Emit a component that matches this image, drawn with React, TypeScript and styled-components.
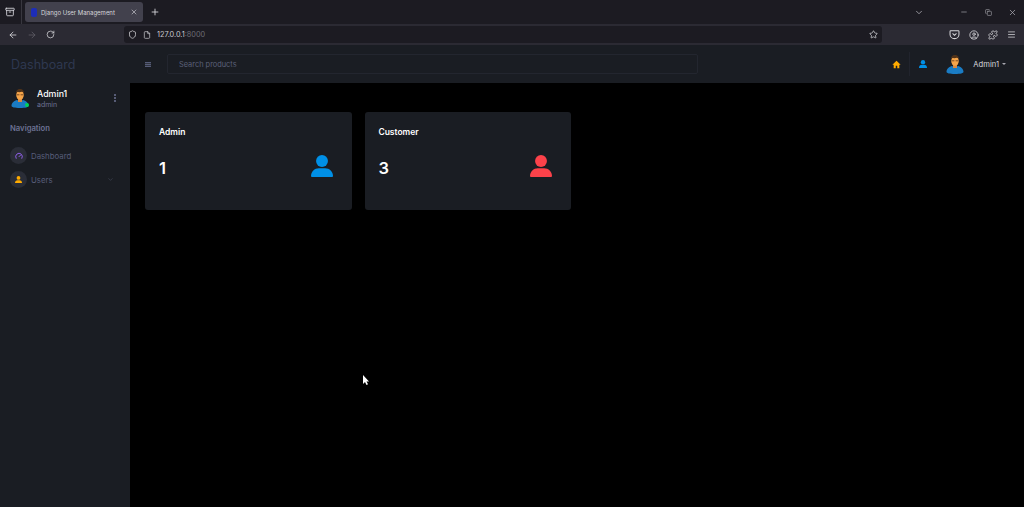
import React from "react";
import styled, { createGlobalStyle } from "styled-components";
import { ArrowLeft, ArrowRight, RotateCw, Shield, File, Star, Plus, X, ChevronDown, Minus, CircleUser, Puzzle, Menu, Copy, Archive, Gauge } from "lucide-react";

const Global = createGlobalStyle`
  html, body { margin: 0; padding: 0; background: #000; width: 1024px; height: 507px; overflow: hidden; }
  body { font-family: Inter, Roboto, "Liberation Sans", sans-serif; }
  #root { width: 1024px; height: 507px; }
`;

const Page = styled.div`
  position: relative;
  width: 1024px;
  height: 507px;
  display: flex;
  flex-direction: column;
  background: #000;
  overflow: hidden;
`;

const TabStrip = styled.div`
  height: 24px;
  flex: none;
  display: flex;
  align-items: center;
  background: #1c1b22;
  color: #e0e0e6;
`;
const TabViews = styled.div`
  width: 22px;
  height: 24px;
  display: flex;
  align-items: center;
  justify-content: center;
  border-right: 1px solid #38373f;
  box-sizing: border-box;
  padding-right: 1px;
  flex: none;
`;
const Tab = styled.div`
  width: 118px;
  height: 20px;
  margin-left: 3px;
  background: #42414d;
  border-radius: 3px;
  display: flex;
  align-items: center;
  padding: 0 5px 0 6px;
  box-sizing: border-box;
  flex: none;
`;
const Favicon = styled.span`
  width: 6px;
  height: 9px;
  border-radius: 2px;
  background: #1d2db8;
  margin-right: 4px;
  flex: none;
`;
const TabTitle = styled.span`
  flex: 1;
  font-size: 6px;
  color: #d6d6dc;
  white-space: nowrap;
`;
const NewTab = styled.span`
  display: flex;
  margin-left: 7px;
`;
const Spacer = styled.div`
  flex: 1;
`;
const WindowControls = styled.div`
  display: flex;
  align-items: center;
  color: #a8a8b0;
`;
const ControlSlot = styled.span<{ $w: number }>`
  width: ${(p) => p.$w}px;
  display: flex;
  justify-content: center;
`;

const NavBar = styled.div`
  height: 21px;
  flex: none;
  display: flex;
  align-items: center;
  background: #2b2a33;
  color: #d5d5da;
`;
const NavButtons = styled.div`
  width: 124px;
  flex: none;
  display: flex;
  align-items: center;
  padding-left: 8px;
  gap: 9px;
  box-sizing: border-box;
`;
const UrlBar = styled.div`
  width: 758px;
  height: 17px;
  flex: none;
  background: #1c1b22;
  border-radius: 3px;
  display: flex;
  align-items: center;
  padding: 0 4px;
  box-sizing: border-box;
  gap: 6px;
`;
const UrlText = styled.span`
  font-size: 7.3px;
  color: #c8c8ce;
  flex: 1;
`;
const UrlPort = styled.span`
  color: #6d6d75;
`;
const NavTools = styled.div`
  flex: 1;
  display: flex;
  align-items: center;
  padding-left: 67px;
  gap: 9px;
`;

const Shell = styled.div`
  flex: 1;
  display: flex;
  min-height: 0;
`;
const Sidebar = styled.aside`
  width: 130px;
  flex: none;
  background: #1a1d23;
  display: flex;
  flex-direction: column;
`;
const Brand = styled.div`
  height: 38px;
  display: flex;
  align-items: center;
  padding-left: 11px;
  font-size: 12.5px;
  color: #2e3850;
  flex: none;
`;
const Profile = styled.div`
  display: flex;
  align-items: center;
  padding: 5px 11px 0 11px;
  height: 20px;
`;
const AvatarWrap = styled.div`
  position: relative;
  width: 18px;
  height: 20px;
  flex: none;
`;
const OnlineDot = styled.span`
  position: absolute;
  right: 0;
  bottom: 1px;
  width: 4px;
  height: 4px;
  border-radius: 50%;
  background: #00d25b;
`;
const ProfileText = styled.div`
  margin-left: 8px;
  flex: 1;
  display: flex;
  flex-direction: column;
  gap: 1px;
`;
const ProfileName = styled.div`
  font-size: 8.8px;
  line-height: 12px;
  font-weight: 500;
  color: #fff;
`;
const ProfileRole = styled.div`
  font-size: 7px;
  line-height: 8px;
  color: #6c7293;
`;
const Kebab = styled.div`
  display: flex;
  flex-direction: column;
  gap: 1px;
  margin-right: 3px;
  span {
    width: 2px;
    height: 2px;
    background: #6c7293;
    border-radius: 50%;
  }
`;
const NavHeading = styled.div`
  font-size: 7.7px;
  font-weight: 600;
  color: #6c7293;
  padding: 15px 0 0 10px;
  line-height: 12px;
`;
const NavList = styled.div`
  display: flex;
  flex-direction: column;
  gap: 7px;
  padding: 12px 0 0 10px;
`;
const NavItem = styled.div`
  display: flex;
  align-items: center;
  height: 17px;
  font-size: 7.8px;
  color: #565c78;
`;
const NavIcon = styled.span`
  width: 17px;
  height: 17px;
  border-radius: 50%;
  background: #2a2d37;
  display: flex;
  align-items: center;
  justify-content: center;
  margin-right: 4px;
  flex: none;
`;
const NavLabel = styled.span`
  flex: 1;
`;
const NavChevron = styled.span`
  display: flex;
  margin-right: 16px;
  color: #454a5c;
`;

const Content = styled.div`
  flex: 1;
  display: flex;
  flex-direction: column;
  min-width: 0;
`;
const Header = styled.header`
  height: 38px;
  flex: none;
  background: #1a1d23;
  display: flex;
  align-items: center;
  padding-left: 15px;
`;
const Burger = styled.span`
  width: 6px;
  height: 5px;
  flex: none;
  margin-right: 16px;
  background: repeating-linear-gradient(#565c78 0 1px, #30343f 1px 2px);
`;
const Search = styled.div`
  width: 531px;
  height: 20px;
  flex: none;
  box-sizing: border-box;
  border: 1px solid #23262f;
  border-radius: 2px;
  display: flex;
  align-items: center;
  padding-left: 11px;
  font-size: 7.4px;
  color: #5a6078;
`;
const HeaderRight = styled.div`
  flex: 1;
  display: flex;
  align-items: center;
  justify-content: flex-end;
  padding-right: 18px;
`;
const HeaderIcon = styled.span`
  display: flex;
  width: 9px;
`;
const HeaderDivider = styled.span`
  width: 1px;
  height: 24px;
  background: #21242d;
  margin: 0 9px 0 8px;
`;
const HeaderAvatar = styled.span`
  width: 18px;
  height: 20px;
  display: flex;
  margin: 0 9px 0 18px;
`;
const HeaderName = styled.span`
  font-size: 7.6px;
  color: #d8d8de;
`;
const Caret = styled.span`
  width: 0;
  height: 0;
  margin-left: 3px;
  border-left: 2px solid transparent;
  border-right: 2px solid transparent;
  border-top: 2px solid #a8a8b0;
`;

const Main = styled.main`
  flex: 1;
  background: #000;
  display: flex;
  align-items: flex-start;
  gap: 13px;
  padding: 28.5px 0 0 15.3px;
`;
const Card = styled.section`
  width: 206.4px;
  height: 98.5px;
  box-sizing: border-box;
  background: #1a1d23;
  border-radius: 3px;
  padding: 14.5px 18.7px 0 13.7px;
  display: flex;
  flex-direction: column;
`;
const CardTitle = styled.div`
  font-size: 8.5px;
  line-height: 13px;
  font-weight: 600;
  color: #fff;
`;
const CardRow = styled.div`
  display: flex;
  align-items: center;
  justify-content: space-between;
  margin-top: 16px;
  height: 26px;
`;
const CardValue = styled.div`
  font-size: 16.5px;
  font-weight: 600;
  color: #fff;
`;
const CardIcon = styled.div`
  margin-bottom: 4px;
`;
const PersonSvg = styled.svg<{ $c: string }>`
  fill: ${(p) => p.$c};
  display: block;
`;
const Pointer = styled.svg`
  position: absolute;
  left: 362px;
  top: 374px;
`;

function Person({ size, color }: { size: number; color: string }) {
  return (
    <PersonSvg $c={color} width={size} height={size} viewBox="0 0 24 24">
      <circle cx="12" cy="6.500" r="6.500" />
      <path d="M0 23c0-5 3.800-8.600 8.600-8.600h6.800c4.800 0 8.600 3.600 8.600 8.600 0 .6-.4 1-1 1H1c-.6 0-1-.4-1-1z" />
    </PersonSvg>
  );
}

function Avatar() {
  return (
    <svg width="18" height="20" viewBox="0 0 18 20">
      <path d="M0.500 18c0-3.500 3-5.500 5.500-6l3 1.500 3-1.500c2.500.5 5.500 2.500 5.500 6 0 1-3 2-8.500 2S.5 19 .5 18z" fill="#1a7cc4" />
      <rect x="7" y="10" width="4" height="4" fill="#d9893f" />
      <ellipse cx="9" cy="7" rx="3.800" ry="4.800" fill="#f5a54a" />
      <path d="M5 6c-.3-3.500 1.500-5 4-5s4.300 1.500 4 5c-.6-1.500-1.300-2-2-2.200-1.500.4-3.500.4-4.500.2C5.800 4.300 5.300 5 5 6z" fill="#4f3219" />
      <rect x="5.600" y="6" width="2.800" height="1.400" fill="#7a4a20" opacity=".7" />
      <rect x="9.600" y="6" width="2.800" height="1.400" fill="#7a4a20" opacity=".7" />
    </svg>
  );
}

function HomeGlyph() {
  return (
    <svg width="9" height="9" viewBox="0 0 24 24" fill="#ffab00">
      <path d="M12 2 1 12.500h3.500V22h5.500v-6.500h4V22h5.500v-9.500H23z" />
    </svg>
  );
}

function Pocket() {
  return (
    <svg width="11" height="11" viewBox="0 0 16 16" fill="none" stroke="#d5d5da" strokeWidth="1.500">
      <path d="M2.500 2.500h11c.6 0 1 .4 1 1V8c0 3.500-3 6-6.500 6S1.500 11.500 1.500 8V3.500c0-.6.400-1 1-1z" />
      <path d="m5.500 6.800 2.500 2.400 2.500-2.400" strokeLinecap="round" />
    </svg>
  );
}

export default function App() {
  return (
    <Page>
      <Global />
      <TabStrip>
        <TabViews><Archive size={10} strokeWidth={2} /></TabViews>
        <Tab>
          <Favicon />
          <TabTitle>Django User Management</TabTitle>
          <X size={8} color="#c8c8ce" />
        </Tab>
        <NewTab><Plus size={10} /></NewTab>
        <Spacer />
        <WindowControls>
          <ControlSlot $w={10}><ChevronDown size={11} /></ControlSlot>
          <ControlSlot $w={27} />
          <ControlSlot $w={25}><Minus size={8} /></ControlSlot>
          <ControlSlot $w={24}><Copy size={7} /></ControlSlot>
          <ControlSlot $w={24}><X size={9} /></ControlSlot>
        </WindowControls>
      </TabStrip>
      <NavBar>
        <NavButtons>
          <ArrowLeft size={10} />
          <ArrowRight size={10} color="#5e5d66" />
          <RotateCw size={9} />
        </NavButtons>
        <UrlBar>
          <Shield size={9} />
          <File size={8} />
          <UrlText>127.0.0.1<UrlPort>:8000</UrlPort></UrlText>
          <Star size={9} />
        </UrlBar>
        <NavTools>
          <Pocket />
          <CircleUser size={10} />
          <Puzzle size={10} />
          <Menu size={9} />
        </NavTools>
      </NavBar>
      <Shell>
        <Sidebar>
          <Brand>Dashboard</Brand>
          <Profile>
            <AvatarWrap><Avatar /><OnlineDot /></AvatarWrap>
            <ProfileText>
              <ProfileName>Admin1</ProfileName>
              <ProfileRole>admin</ProfileRole>
            </ProfileText>
            <Kebab><span /><span /><span /></Kebab>
          </Profile>
          <NavHeading>Navigation</NavHeading>
          <NavList>
            <NavItem>
              <NavIcon><Gauge size={8} strokeWidth={3} color="#8f5fe8" /></NavIcon>
              <NavLabel>Dashboard</NavLabel>
            </NavItem>
            <NavItem>
              <NavIcon><Person size={7} color="#ffab00" /></NavIcon>
              <NavLabel>Users</NavLabel>
              <NavChevron><ChevronDown size={7} /></NavChevron>
            </NavItem>
          </NavList>
        </Sidebar>
        <Content>
          <Header>
            <Burger />
            <Search>Search products</Search>
            <HeaderRight>
              <HeaderIcon><HomeGlyph /></HeaderIcon>
              <HeaderDivider />
              <HeaderIcon><Person size={8} color="#0090e7" /></HeaderIcon>
              <HeaderAvatar><Avatar /></HeaderAvatar>
              <HeaderName>Admin1</HeaderName>
              <Caret />
            </HeaderRight>
          </Header>
          <Main>
            <Card>
              <CardTitle>Admin</CardTitle>
              <CardRow>
                <CardValue>1</CardValue>
                <CardIcon><Person size={22} color="#0090e7" /></CardIcon>
              </CardRow>
            </Card>
            <Card>
              <CardTitle>Customer</CardTitle>
              <CardRow>
                <CardValue>3</CardValue>
                <CardIcon><Person size={22} color="#fc424a" /></CardIcon>
              </CardRow>
            </Card>
          </Main>
        </Content>
      </Shell>
      <Pointer width="8" height="12" viewBox="0 0 8 12">
        <path d="M1 1v9l2-2 1.500 3 1.500-.7L4.500 7.500H7z" fill="#fff" />
      </Pointer>
    </Page>
  );
}
